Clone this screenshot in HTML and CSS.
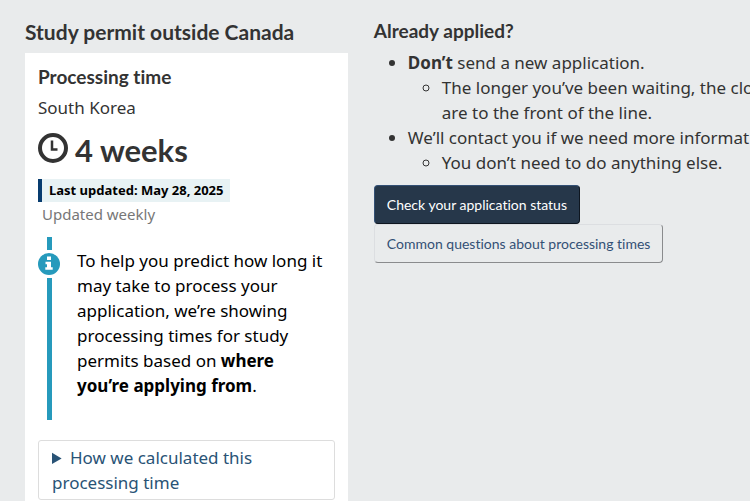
FILE: index.html
```html
<!DOCTYPE html>
<html lang="en">
<head>
<meta charset="utf-8">
<meta name="viewport" content="width=device-width, initial-scale=1">
<title>Study permit processing time</title>
<link rel="stylesheet" href="styles.css">
</head>
<body>
<main class="results">
  <section class="permit">
    <h2 class="permit-title">Study permit outside Canada</h2>
    <div class="card">
      <h3 class="card-title">Processing time</h3>
      <p class="country">South Korea</p>
      <p class="duration">
        <svg class="clock" viewBox="0 0 30 30" aria-hidden="true">
          <circle cx="15" cy="15" r="13" fill="none" stroke="currentColor" stroke-width="4"/>
          <path d="M14 7.500V16.500H19.500" fill="none" stroke="currentColor" stroke-width="2.500"/>
        </svg>
        <span>4 weeks</span>
      </p>
      <p class="updated">Last updated: May 28, 2025</p>
      <p class="frequency">Updated weekly</p>
      <div class="notice">
        <div class="rail">
          <svg class="info" viewBox="0 0 22 22" aria-hidden="true">
            <circle cx="11" cy="11" r="11" fill="#269abc"/>
            <path d="M9 3.500h4v3.500H9zM7.500 8.700H13v5.600h1.700v2.500H7.300v-2.500H9v-3.100H7.500z" fill="#fff"/>
          </svg>
        </div>
        <p class="notice-text">To help you predict how long it may take to process your application, we’re showing processing times for study permits based on <strong>where you’re applying from</strong>.</p>
      </div>
      <details class="method">
        <summary>How we calculated this processing time</summary>
      </details>
    </div>
  </section>
  <section class="applied">
    <h3 class="applied-title">Already applied?</h3>
    <ul class="advice">
      <li><strong>Don’t</strong> send a new application.
        <ul><li>The longer you’ve been waiting, the closer you are to the front of the line.</li></ul>
      </li>
      <li>We’ll contact you if we need more information.
        <ul><li>You don’t need to do anything else.</li></ul>
      </li>
    </ul>
    <div class="actions">
      <a class="button button-primary" href="#status">Check your application status</a>
      <a class="button" href="#questions">Common questions about processing times</a>
    </div>
  </section>
</main>
</body>
</html>
```
FILE: styles.css
```css
* { box-sizing: border-box; }

body {
  margin: 0;
  overflow: hidden;
  background: #e9ebec;
  color: #333;
  font: 17px/25px "Noto Sans", sans-serif;
  font-variant-ligatures: none;
}

h2, h3, p, ul { margin: 0; }

h2, h3, .duration, .button { font-family: Lato, sans-serif; }

.results {
  display: grid;
  grid-template-columns: 7fr 10fr;
  column-gap: 26px;
  min-width: 860px;
  padding: 18px 25px 0;
}

.permit-title {
  padding-bottom: 7px;
  font-size: 21px;
  line-height: 28px;
}

.card {
  padding: 11px 13px;
  background: #fff;
}

.card-title, .applied-title {
  font-size: 19px;
  line-height: 25px;
}

.country { margin-top: 6px; }

.duration {
  display: flex;
  align-items: center;
  gap: 7px;
  margin-top: 10px;
  font-size: 31px;
  font-weight: 700;
  line-height: 40px;
}

.clock {
  width: 30px;
  height: 30px;
  margin-bottom: 4px;
}

.updated {
  width: fit-content;
  margin-top: 9px;
  padding: 0 7px;
  border-left: 4px solid #083c6f;
  background: #e8f2f4;
  color: #000;
  font-size: 13px;
  font-weight: 700;
  line-height: 23px;
}

.frequency {
  padding-left: 4px;
  color: #777;
  font-size: 15px;
  line-height: 24px;
}

.notice {
  display: flex;
  gap: 17px;
  margin-top: 11px;
  color: #000;
}

.rail {
  flex: none;
  width: 22px;
  padding-top: 13px;
  background: linear-gradient(#269abc, #269abc) center / 5px 100% no-repeat;
}

.info {
  display: block;
  width: 22px;
  height: 28px;
  background: #fff;
}

.notice-text { padding: 11px 8px 22px 0; }

.method {
  margin-top: 20px;
  padding: 4px 13px;
  border: 1px solid #ddd;
  border-radius: 3px;
  color: #295376;
}

.method summary { cursor: pointer; }

.advice {
  margin-top: 7px;
  padding-left: 34px;
}

.advice ul { padding-left: 34px; }

.actions {
  display: flex;
  flex-direction: column;
  align-items: flex-start;
  margin-top: 10px;
}

.button {
  padding: 8px 12px;
  border: 1px outset #dcdee1;
  border-radius: 4px;
  color: #335075;
  font-size: 14px;
  line-height: 21px;
  text-decoration: none;
}

.button-primary {
  border-color: #335075;
  background: #26374a;
  color: #fff;
}
```
